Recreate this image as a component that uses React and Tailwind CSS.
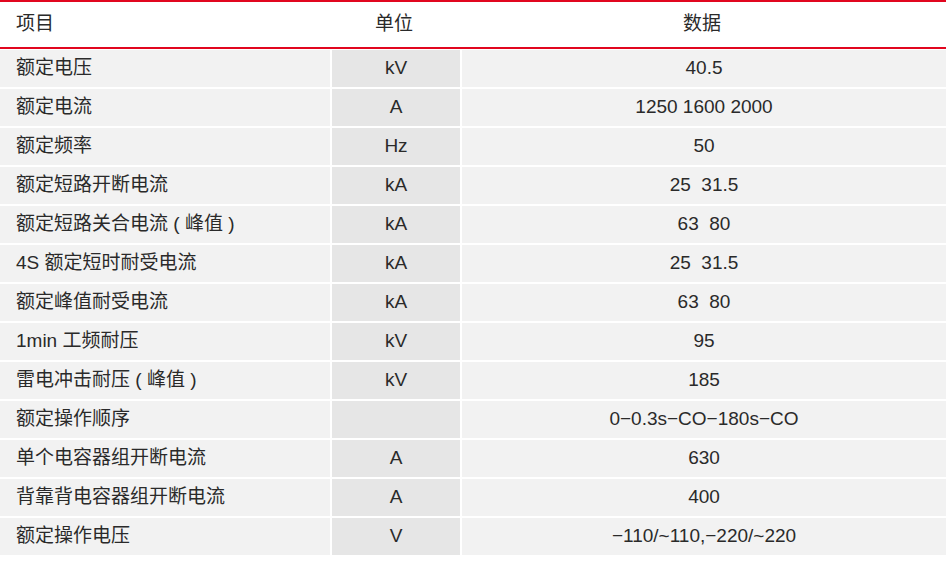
const rows = [
  ["额定电压", "kV", "40.5"],
  ["额定电流", "A", "1250 1600 2000"],
  ["额定频率", "Hz", "50"],
  ["额定短路开断电流", "kA", "25  31.5"],
  ["额定短路关合电流 ( 峰值 )", "kA", "63  80"],
  ["4S 额定短时耐受电流", "kA", "25  31.5"],
  ["额定峰值耐受电流", "kA", "63  80"],
  ["1min 工频耐压", "kV", "95"],
  ["雷电冲击耐压 ( 峰值 )", "kV", "185"],
  ["额定操作顺序", "", "0−0.3s−CO−180s−CO"],
  ["单个电容器组开断电流", "A", "630"],
  ["背靠背电容器组开断电流", "A", "400"],
  ["额定操作电压", "V", "−110/~110,−220/~220"],
];

export default function App() {
  return (
    <div
      className="w-[946px] h-[563px] bg-white text-[#2a2a2a] text-[19px] overflow-hidden"
      style={{ fontFamily: '"Liberation Sans", "Noto Sans CJK SC", sans-serif' }}
    >
      <div className="grid grid-cols-[330px_128px_1fr] h-[49px] border-t-2 border-b-2 border-[#e1061f] items-center">
        <div className="pl-4">项目</div>
        <div className="text-center">单位</div>
        <div className="text-center">数据</div>
      </div>
      <div className="flex flex-col gap-[2px] pt-px">
        {rows.map(([name, unit, value]) => (
          <div key={name} className="grid grid-cols-[330px_128px_1fr] gap-x-[2px] h-[37px]">
            <div className="bg-[#f2f2f2] pl-4 flex items-center whitespace-pre">{name}</div>
            <div className="bg-[#e6e6e6] flex items-center justify-center">{unit}</div>
            <div className="bg-[#f2f2f2] flex items-center justify-center whitespace-pre">{value}</div>
          </div>
        ))}
      </div>
    </div>
  );
}
